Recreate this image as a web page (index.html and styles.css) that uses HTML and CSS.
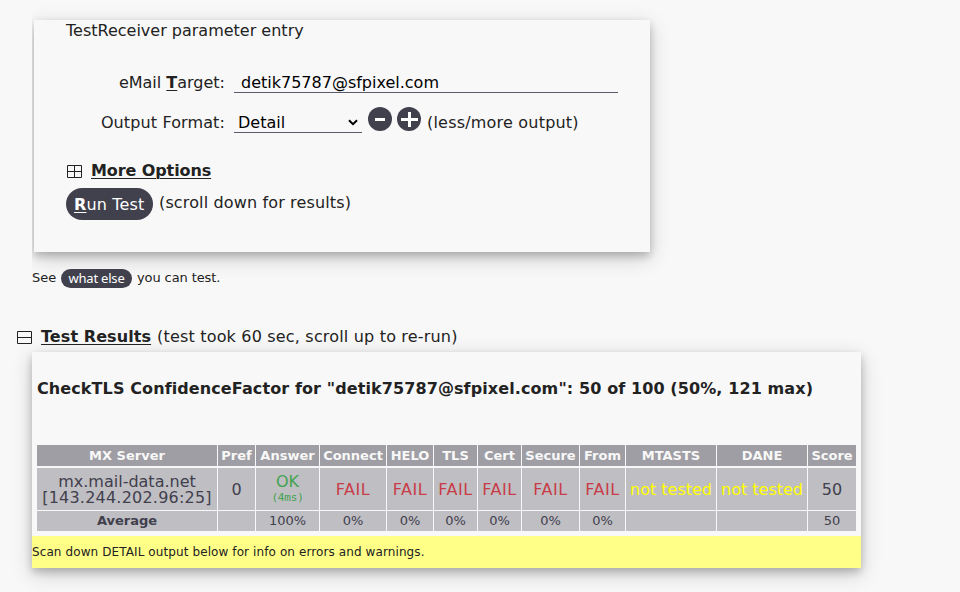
FILE: index.html
```html
<!DOCTYPE html>
<html lang="en">
<head>
<meta charset="utf-8">
<title>TestReceiver</title>
<link rel="stylesheet" href="styles.css">
</head>
<body>
<section class="card entry">
  <div class="legend"><span class="t-legend">TestReceiver parameter entry</span></div>
  <div class="field target">
    <label><span class="t-target">eMail <b class="key">T</b>arget:</span></label>
    <div class="input"><span class="t-mail">detik75787@sfpixel.com</span></div>
  </div>
  <div class="field format">
    <label><span class="t-format">Output Format:</span></label>
    <div class="select"><span class="t-detail">Detail</span>
      <svg width="10" height="7" viewBox="0 0 10 7"><path d="M1 1.3 5 5.2 9 1.3" fill="none" stroke="#000" stroke-width="2"/></svg>
    </div>
    <svg class="round" width="24" height="24" viewBox="0 0 24 24"><circle cx="12" cy="12" r="12" fill="#41404d"/><path d="M7 12.5h10" stroke="#fff" stroke-width="3"/></svg>
    <svg class="round second" width="24" height="24" viewBox="0 0 24 24"><circle cx="12" cy="12" r="12" fill="#41404d"/><path d="M4 12.5h17M12.5 5v15" stroke="#fff" stroke-width="3"/></svg>
    <span class="t-less">(less/more output)</span>
  </div>
  <div class="options">
    <svg width="15" height="13" viewBox="0 0 15 13"><path d="M.5.5h14v12H.5zM.5 6.5h14M7.5.5v12" fill="none" stroke="#222"/></svg>
    <b class="link t-more">More Options</b>
  </div>
  <div class="run">
    <div class="button"><span class="t-run"><b class="key">R</b>un Test</span></div>
    <span class="t-scroll">(scroll down for results)</span>
  </div>
</section>
<div class="see">
  <span class="t-see">See</span><span class="pill"><span class="t-what">what else</span></span><span class="t-you">you can test.</span>
</div>
<div class="results-title">
  <svg width="15" height="13" viewBox="0 0 15 13"><path d="M.5.5h14v12H.5zM.5 6.5h14" fill="none" stroke="#222"/></svg>
  <b class="link t-results">Test Results</b><span class="t-took">(test took 60 sec, scroll up to re-run)</span>
</div>
<section class="card results">
  <h3><span class="t-check">CheckTLS ConfidenceFactor for "detik75787@sfpixel.com": 50 of 100 (50%, 121 max)</span></h3>
  <div class="grid head">
    <div>MX Server</div><div>Pref</div><div>Answer</div><div>Connect</div><div>HELO</div><div>TLS</div><div>Cert</div><div>Secure</div><div>From</div><div>MTASTS</div><div>DANE</div><div>Score</div>
  </div>
  <div class="grid main">
    <div class="server">mx.mail-data.net<br><span class="t-ip">[143.244.202.96:25]</span></div>
    <div>0</div>
    <div class="ok"><span>OK</span><small>(4ms)</small></div>
    <div class="fail">FAIL</div><div class="fail">FAIL</div><div class="fail">FAIL</div><div class="fail">FAIL</div><div class="fail">FAIL</div><div class="fail">FAIL</div>
    <div class="skip">not tested</div><div class="skip">not tested</div><div>50</div>
  </div>
  <div class="grid average">
    <div><b>Average</b></div><div></div><div>100%</div><div>0%</div><div>0%</div><div>0%</div><div>0%</div><div>0%</div><div>0%</div><div></div><div></div><div>50</div>
  </div>
  <div class="notice"><span class="t-scan">Scan down DETAIL output below for info on errors and warnings.</span></div>
</section>
</body>
</html>
```
FILE: styles.css
```css
* { box-sizing: border-box; }
body {
  margin: 0;
  padding-top: 20px;
  height: 592px;
  overflow: hidden;
  background: #f8f8f8;
  color: #222;
  font: 16px/22px "DejaVu Sans", sans-serif;
  white-space: nowrap;
}
svg { display: block; flex: none; }
.card {
  background: #f8f8f8;
  box-shadow: 0 4px 8px 0 rgba(0,0,0,.2), 0 6px 20px 0 rgba(0,0,0,.19);
}
.entry {
  margin-left: 34px;
  width: 616px;
  height: 232px;
  padding-left: 32px;
  clip-path: inset(-40px -40px -40px -2px);
}
.legend { height: 48px; }
.key, .link { text-decoration: underline; text-decoration-thickness: 1px; text-underline-offset: 2px; }
.field { display: flex; }
.field label { width: 168px; padding-right: 9px; text-align: right; }
.target { height: 40px; padding-top: 4px; }
.input { width: 384px; height: 21px; padding-left: 7px; border-bottom: 1px solid #5c5a6d; color: #000; }
.format { height: 48px; padding-top: 4px; }
.t-format { letter-spacing: .12px; }
.select { display: flex; width: 128px; height: 21px; padding: 0 4px; border-bottom: 1px solid #5c5a6d; color: #000; justify-content: space-between; }
.select svg { margin-top: 7px; }
.round { margin: -5px 0 0 6px; }
.round.second { margin: -5px 6px 0 5px; }
.t-less { letter-spacing: .2px; }
.options { display: flex; gap: 9px; height: 32px; padding: 4px 0 0 1px; }
.options svg { margin-top: 5px; }
.t-more { letter-spacing: -.1px; }
.run { display: flex; gap: 6px; line-height: 30px; }
.t-scroll { letter-spacing: .14px; }
.button { width: 87px; height: 32px; border-radius: 16px; padding-left: 8px; background: #41404d; color: #fff; line-height: 34px; }
.t-run { letter-spacing: .15px; }
.see { display: flex; position: relative; height: 20px; margin: 16px 0 0 32px; font-size: 13px; line-height: 20px; }
.t-see { width: 25px; }
.t-you { letter-spacing: -.1px; }
.pill { width: 71px; height: 19px; margin: 1px 5px 0 4px; border-radius: 10px; background: #41404d; color: #fff; font: 13px/18px "Noto Sans", sans-serif; letter-spacing: -.2px; text-align: center; }
.results-title { display: flex; height: 26px; margin: 38px 0 0 17px; }
.results-title svg { margin: 5px 9px 0 0; }
.t-results { margin-right: 6px; letter-spacing: .08px; }
.t-took { letter-spacing: .18px; }
.results { width: 829px; height: 216px; margin-left: 32px; }
h3 { margin: 0; height: 93px; padding: 26px 0 0 5px; font-size: 16px; line-height: 22px; letter-spacing: .1px; }
.grid {
  display: grid;
  grid-template-columns: 180px 37px 63px 66px 46px 43px 43px 57px 45px 90px 90px 48px;
  column-gap: 1px;
  margin-left: 5px;
  text-align: center;
}
.grid > div { background: #bfbec3; color: #41404d; display: flex; flex-direction: column; align-items: center; justify-content: center; }
.head { height: 21px; margin-bottom: 2px; font-size: 13px; line-height: 20px; font-weight: bold; }
.grid.head > div { background: #9f9ea4; color: #f8f8f8; }
.main { height: 42px; margin-bottom: 1px; }
.grid.main > div { padding-top: 2px; }
.grid.main > .server { display: block; padding-top: 6px; line-height: 16px; }
.t-ip { letter-spacing: .22px; }
.average { height: 20px; margin-bottom: 5px; font-size: 13px; line-height: 20px; }
.grid > .fail { color: #c83c48; letter-spacing: .6px; }
.grid.main > .ok { color: #43a34f; line-height: 16px; padding-top: 1px; }
.ok small { font: 11px/16px "DejaVu Sans Mono", monospace; letter-spacing: -.2px; }
.grid > .skip { color: #ff0; }
.notice { height: 32px; background: #ffff88; font-size: 12px; line-height: 32px; letter-spacing: .1px; }
```
